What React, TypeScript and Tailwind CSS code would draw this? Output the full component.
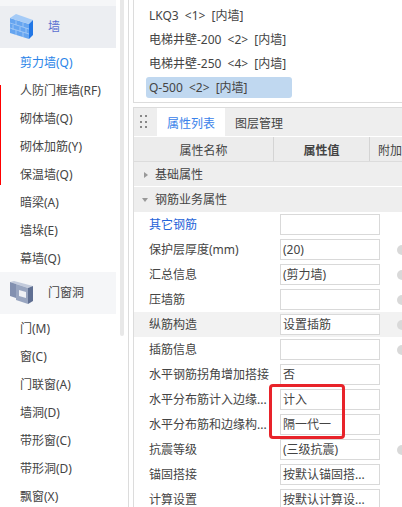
const F = "font-['Noto_Sans','Noto_Sans_CJK_SC',sans-serif]";

function WallIcon() {
  return (
    <svg width="24" height="26" viewBox="0 0 24 26" className="shrink-0">
      <path d="M0 4 L19 10 L19 25 L0 19Z" fill="#66a5f0" />
      <path d="M0 4 L6 0 L23 6 L19 10Z" fill="#a5cbf7" />
      <path d="M19 10 L23 6 L23 21 L19 25Z" fill="#2277e6" />
      <path d="M0 9 L19 15 M0 14 L19 20 M6 6 L6 11 M13 8 L13 13 M3 11 L3 16 M10 13 L10 18 M16 14 L16 19 M6 16 L6 21 M13 18 L13 23" stroke="#a9cdf6" strokeWidth="0.8" fill="none" />
    </svg>
  );
}

function DoorIcon() {
  return (
    <svg width="23" height="24" viewBox="0 0 23 24" className="shrink-0">
      <path d="M0 1 L4 0 L23 5 L18 7Z" fill="#c3cbdc" />
      <path d="M0 1 L6 3 L6 17 L0 15Z" fill="#8290b0" />
      <path d="M6 3 L18 7 L18 23 L6 19Z" fill="#98a5c0" />
      <path d="M18 7 L23 5 L23 20 L18 23Z" fill="#5f6f92" />
      <path d="M9 9 L16 11 L16 17 L9 15Z" fill="#eef0f5" />
    </svg>
  );
}

function Item({ label, active }: { label: string; active?: boolean }) {
  return (
    <div className={`h-7 pl-5 pt-[1px] flex items-center text-[12px] whitespace-nowrap ${active ? "text-[#2a84e8]" : "text-[#444]"}`}>
      {label}
    </div>
  );
}

function Row({ name, value, blue, shade, dot }: { name: string; value?: string; blue?: boolean; shade?: boolean; dot?: boolean }) {
  return (
    <div className={`h-[25px] shrink-0 flex items-center ${shade ? "bg-[#f2f2f2]" : ""}`}>
      <div className={`w-[146px] pl-[15px] text-[12px] whitespace-nowrap shrink-0 ${blue ? "text-[#2563d8]" : "text-[#444]"}`}>{name}</div>
      <div className="w-[100px] h-[21px] border border-[#d9d9d9] bg-white pl-[2px] text-[12px] leading-[19px] text-[#444] whitespace-nowrap overflow-hidden shrink-0">{value}</div>
      {dot && <div className="ml-[17px] w-[10px] h-[10px] rounded-full bg-[#d9d9d9] shrink-0" />}
    </div>
  );
}

export default function App() {
  return (
    <div className={`${F} relative w-[402px] h-[507px] bg-white flex overflow-hidden`}>
      <div className="relative w-[116px] shrink-0">
        <div className="h-[6px] bg-[#f5f6f8]" />
        <div className="h-[42px] bg-[#eceef2] flex items-center pl-[10px] gap-[14px] text-[12px] text-[#5a6fd0]">
          <WallIcon />
          <span>墙</span>
        </div>
        <Item label="剪力墙(Q)" active />
        <Item label="人防门框墙(RF)" />
        <Item label="砌体墙(Q)" />
        <Item label="砌体加筋(Y)" />
        <Item label="保温墙(Q)" />
        <Item label="暗梁(A)" />
        <Item label="墙垛(E)" />
        <Item label="幕墙(Q)" />
        <div className="h-[42px] bg-[#f5f6f8] flex items-center pl-[10px] gap-[15px] text-[12px] text-[#444]">
          <DoorIcon />
          <span>门窗洞</span>
        </div>
        <Item label="门(M)" />
        <Item label="窗(C)" />
        <Item label="门联窗(A)" />
        <Item label="墙洞(D)" />
        <Item label="带形窗(C)" />
        <Item label="带形洞(D)" />
        <Item label="飘窗(X)" />
        <div className="absolute left-0 top-[85px] w-px h-[100px] bg-[#ff0000]" />
      </div>
      <div className="w-[4px] ml-[4px] bg-[#e8e8e8] rounded-b-full h-[336px] shrink-0" />
      <div className="w-[4px] shrink-0" />
      <div className="w-px bg-[#dcdcdc] shrink-0" />
      <div className="w-[4px] shrink-0" />
      <div className="flex-1 min-w-0 flex flex-col">
        <div className="h-[103px] shrink-0 border-l border-b border-[#dcdcdc] pl-[12px] pt-[3px] text-[12px] text-[#444] [word-spacing:3px]">
          <div className="h-6 flex items-center pl-[3px] pt-[2px] whitespace-pre">LKQ3 &lt;1&gt; [内墙]</div>
          <div className="h-6 flex items-center pl-[3px] pt-[2px] whitespace-pre">电梯井壁-200 &lt;2&gt; [内墙]</div>
          <div className="h-6 flex items-center pl-[3px] pt-[2px] whitespace-pre">电梯井壁-250 &lt;4&gt; [内墙]</div>
          <div className="h-[21px] w-[146px] mt-[2px] flex items-center pl-[3px] pt-[1px] rounded-[3px] bg-[#c0d8f0] whitespace-pre">Q-500 &lt;2&gt; [内墙]</div>
        </div>
        <div className="h-[4px] bg-white shrink-0" />
        <div className="flex-1 border-l border-t border-[#dcdcdc] flex flex-col">
          <div className="h-[29px] bg-[#eeeeee] flex items-start pl-[23px] text-[12px] relative border-b border-white shrink-0">
            <div className="absolute left-[6px] top-[7px] w-[7px] h-[14px] grid grid-cols-2 gap-[3px]">
              <span className="w-[2px] h-[2px] bg-[#888]" /><span className="w-[2px] h-[2px] bg-[#888]" />
              <span className="w-[2px] h-[2px] bg-[#888]" /><span className="w-[2px] h-[2px] bg-[#888]" />
              <span className="w-[2px] h-[2px] bg-[#888]" /><span className="w-[2px] h-[2px] bg-[#888]" />
            </div>
            <div className="w-[68px] h-[28px] pt-[3px] bg-white text-[#3a82ea] flex items-center justify-center">属性列表</div>
            <div className="w-[68px] h-[28px] pt-[3px] text-[#444] flex items-center justify-center">图层管理</div>
          </div>
          <div className="h-[25px] bg-[#ececec] border-b border-[#dcdcdc] flex text-[12px] text-[#444] overflow-hidden shrink-0">
            <div className="w-[146px] pt-[3px] border-r border-[#d4d4d4] flex items-center justify-center">属性名称</div>
            <div className="w-[100px] pt-[3px] border-r border-[#d4d4d4] flex items-center justify-center font-bold">属性值</div>
            <div className="pl-[8px] pt-[3px] flex items-center whitespace-nowrap">附加</div>
          </div>
          <div className="h-[25px] bg-[#eeeeee] border-b border-white pt-[1px] flex items-center text-[12px] text-[#444] shrink-0">
            <span className="w-0 h-0 ml-[10px] border-y-[3px] border-y-transparent border-l-[4px] border-l-[#999]" />
            <span className="ml-[7px]">基础属性</span>
          </div>
          <div className="h-[25px] bg-[#eeeeee] pt-[1px] flex items-center text-[12px] text-[#444] shrink-0">
            <span className="w-0 h-0 ml-[8px] border-x-[3px] border-x-transparent border-t-[4px] border-t-[#999]" />
            <span className="ml-[7px]">钢筋业务属性</span>
          </div>
          <Row name="其它钢筋" blue />
          <Row name="保护层厚度(mm)" value="(20)" dot />
          <Row name="汇总信息" value="(剪力墙)" dot />
          <Row name="压墙筋" dot />
          <Row name="纵筋构造" value="设置插筋" shade dot />
          <Row name="插筋信息" dot />
          <Row name="水平钢筋拐角增加搭接" value="否" />
          <Row name="水平分布筋计入边缘..." value="计入" />
          <Row name="水平分布筋和边缘构..." value="隔一代一" />
          <Row name="抗震等级" value="(三级抗震)" dot />
          <Row name="锚固搭接" value="按默认锚固搭..." />
          <Row name="计算设置" value="按默认计算设..." />
        </div>
      </div>
      <div className="absolute left-[269px] top-[384px] w-[76px] h-[55px] border-[3px] border-[#e8232a] rounded-[4px]" />
    </div>
  );
}
